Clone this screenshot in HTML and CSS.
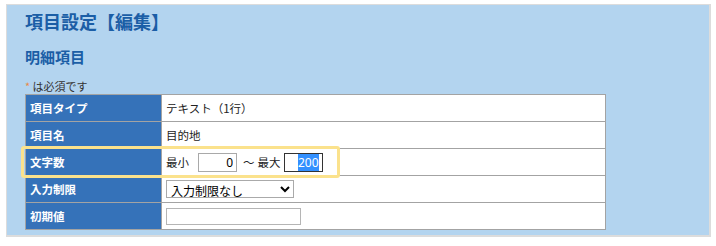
FILE: index.html
```html
<!DOCTYPE html>
<html lang="ja">
<head>
    <meta charset="UTF-8">
    <title>項目設定【編集】</title>
    <link rel="stylesheet" href="styles.css">
</head>
<body>
<div id="panel">
    <h1 class="page-title">項目設定【編集】</h1>
    <h2 class="section-title">明細項目</h2>
    <p class="required-note"><span class="mark">*</span> は必須です</p>
    <table class="formtable">
        <tbody>
        <tr>
            <th>項目タイプ</th>
            <td>テキスト（1行）</td>
        </tr>
        <tr>
            <th>項目名</th>
            <td>目的地</td>
        </tr>
        <tr class="highlighted">
            <th><span class="callout"></span>文字数</th>
            <td>
                <span class="range">
                    最小 <input type="text" class="num" value="0">
                    <span class="tilde">〜</span> 最大 <input type="text" class="num" id="max-len" value="200">
                </span>
            </td>
        </tr>
        <tr>
            <th>入力制限</th>
            <td>
                <select class="restrict">
                    <option>入力制限なし</option>
                </select>
            </td>
        </tr>
        <tr>
            <th>初期値</th>
            <td><input type="text" class="initial" value=""></td>
        </tr>
        </tbody>
    </table>
</div>
<script>
    document.getElementById('max-len').select()
</script>
</body>
</html>
```
FILE: styles.css
```css
body {
    margin: 0;
    font-family: "Noto Sans CJK JP", "Noto Sans", sans-serif;
    color: #222;
}

#panel {
    margin: 4px 5px 7px 6px;
    height: 233px;
    box-sizing: border-box;
    border: 1px solid #dcdcdc;
    border-width: 1px 2px 2px 1px;
    background-color: #b3d4ef;
    padding: 0 0 0 18px;
}

.page-title {
    margin: 0;
    padding-top: 3px;
    font-size: 18px;
    line-height: 26px;
    color: #1b5ea6;
}

.section-title {
    margin: 0;
    padding-top: 12px;
    font-size: 15px;
    line-height: 22px;
    color: #1b5ea6;
}

.required-note {
    margin: 0;
    padding-top: 11px;
    font-size: 11px;
    line-height: 15px;
    color: #333;
}

.required-note .mark {
    color: #e8884a;
}

.formtable {
    width: 581px;
    border-collapse: collapse;
    background-color: white;
    font-size: 11.5px;
}

.formtable th,
.formtable td {
    height: 26px;
    padding: 0 0 0 4px;
    border: 1px solid #a3a3a3;
    text-align: left;
    vertical-align: middle;
}

.formtable th {
    width: 131px;
    background-color: #3572b9;
    color: white;
    font-weight: bold;
}

.highlighted th {
    position: relative;
}

.callout {
    position: absolute;
    top: -3px;
    left: -5px;
    width: 313px;
    height: 26px;
    border: 3px solid #fbe28c;
    border-radius: 3px;
    pointer-events: none;
}

.range {
    display: flex;
    align-items: center;
    gap: 3px;
}

.tilde {
    margin-left: 3px;
}

.num {
    width: 39px;
    height: 19px;
    box-sizing: border-box;
    margin: 0 0 0 6px;
    padding: 0 3px;
    border: 1px solid #a9a9a9;
    font: 12px "Noto Sans", sans-serif;
    text-align: right;
}

#max-len {
    margin-left: 0;
    border-color: #333;
    outline: none;
}

#max-len::selection {
    background-color: #3390ff;
    color: white;
}

.restrict {
    width: 128px;
    height: 18px;
    padding: 0;
    border: 1px solid #aaa;
    border-radius: 0;
    background-color: white;
    font: 12px/16px "Noto Sans CJK JP", sans-serif;
}

.initial {
    width: 135px;
    height: 17px;
    box-sizing: border-box;
    margin: 0;
    border: 1px solid #b5b5b5;
}
```
